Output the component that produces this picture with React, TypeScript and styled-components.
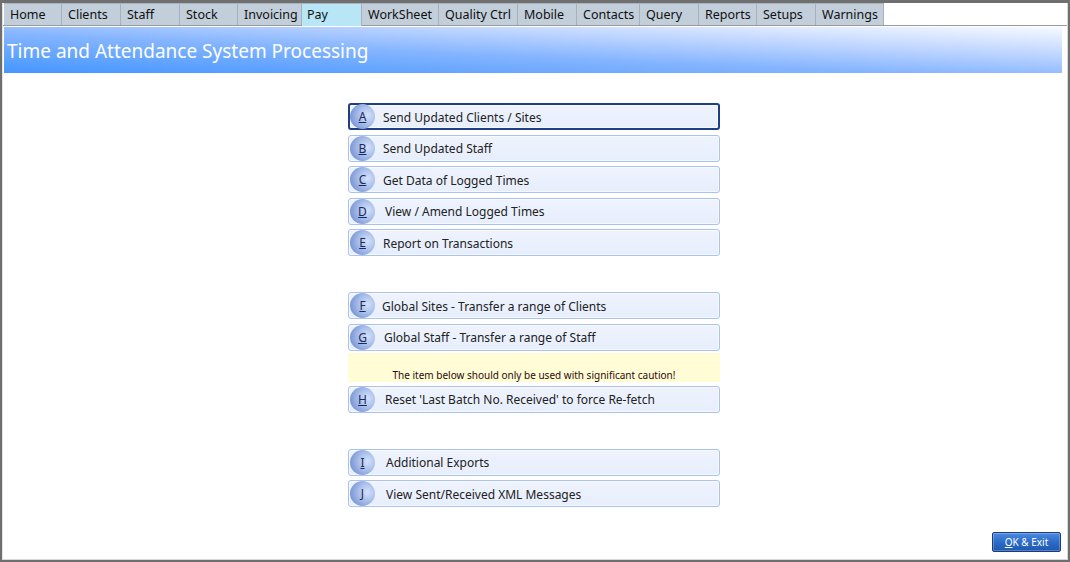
import React from "react";
import styled, { createGlobalStyle } from "styled-components";

const Global = createGlobalStyle`
  html, body { margin: 0; padding: 0; background: #ffffff; }
  body { font-family: "Noto Sans", "Open Sans", "DejaVu Sans", sans-serif; }
  * { box-sizing: border-box; }
`;

const Frame = styled.div`
  width: 1070px;
  height: 562px;
  border: 2px solid #6f6f6f;
  border-top-width: 3px;
  background: #ffffff;
  display: flex;
  flex-direction: column;
  position: relative;
  overflow: hidden;
`;

const Inner = styled.div`
  flex: 1;
  display: flex;
  flex-direction: column;
  border-left: 1px solid #e4e4e4;
  border-right: 1px solid #d8d8d8;
  border-bottom: 1px solid #d8d8d8;
`;

const TabStrip = styled.div`
  display: flex;
  padding-left: 1px;
  height: 23px;
  border-bottom: 1px solid #9a9a9a;
`;

const Tab = styled.div<{ $w: number; $active?: boolean }>`
  width: ${(p) => p.$w}px;
  height: 22px;
  background: ${(p) => (p.$active ? "#b8e6f6" : "#c2ceda")};
  border-right: 1px solid #a7b1bb;
  border-top: 1px solid #aab4be;
  color: #101010;
  font-size: 12.5px;
  line-height: 22px;
  padding-left: ${(p) => (p.$active ? 5 : 6)}px;
  white-space: nowrap;
  overflow: hidden;
  ${(p) => (p.$active ? "height: 23px; margin-bottom: -1px;" : "")}
`;

const Banner = styled.div`
  margin: 1px 5px 0 1px;
  height: 46px;
  background: linear-gradient(to bottom left, #f7faff 0%, #c0d6ff 30%, #84b4ff 58%, #4496ff 100%);
  display: flex;
  align-items: center;
  padding-left: 3px;
  padding-top: 2px;
`;

const Title = styled.div`
  color: #ffffff;
  font-size: 19px;
  font-family: "Noto Sans", "Open Sans", sans-serif;
`;

const Body = styled.div`
  flex: 1;
  display: flex;
  flex-direction: column;
  align-items: flex-start;
  padding-left: 345px;
  padding-top: 30px;
  position: relative;
`;

const Group = styled.div<{ $gap: number }>`
  display: flex;
  flex-direction: column;
  gap: 4.5px;
  margin-bottom: ${(p) => p.$gap}px;
`;

const ActionButton = styled.div<{ $focused?: boolean }>`
  width: 372px;
  height: 27px;
  border-radius: 3px;
  border: ${(p) => (p.$focused ? "2px solid #1e3f86" : "1px solid #a9c2f2")};
  background: linear-gradient(180deg, #eef3fd 0%, #e7eefc 100%);
  display: flex;
  align-items: center;
  padding-left: ${(p) => (p.$focused ? 0 : 1)}px;
  padding-top: 1px;
  box-shadow: inset 0 0 0 1px rgba(255,255,255,0.6);
`;

const Badge = styled.div`
  width: 25px;
  height: 25px;
  border-radius: 50%;
  background: radial-gradient(circle at 70% 45%, #d6e1f8 0%, #a9bfeb 40%, #7895d4 80%, #6482c8 100%);
  display: flex;
  align-items: center;
  justify-content: center;
  color: #1b2a5a;
  font-size: 12px;
  text-decoration: underline;
  flex-shrink: 0;
  margin-top: -1px;
`;

const Label = styled.span<{ $pad: number }>`
  margin-left: ${(p) => p.$pad}px;
  font-size: 12px;
  color: #222222;
  white-space: nowrap;
`;

const Caution = styled.div`
  width: 372px;
  height: 29px;
  margin-top: 2px;
  margin-bottom: 4px;
  background: #fffcd6;
  display: flex;
  align-items: flex-end;
  justify-content: center;
  font-size: 10px;
  color: #2a0a0a;
`;

const OkButton = styled.div`
  position: absolute;
  right: 6px;
  bottom: 7px;
  width: 69px;
  height: 20px;
  border: 1px solid #1b3c78;
  border-radius: 2px;
  background: linear-gradient(180deg, #4d8ae0 0%, #2c6cc8 50%, #1e58b0 100%);
  color: #ffffff;
  font-size: 10px;
  display: flex;
  align-items: center;
  justify-content: center;
  box-shadow: inset 0 0 0 1px rgba(255,255,255,0.25);
`;

const U = styled.span`
  text-decoration: underline;
`;

const tabs: [string, number][] = [
  ["Home", 58],
  ["Clients", 59],
  ["Staff", 59],
  ["Stock", 58],
  ["Invoicing", 64],
  ["Pay", 60],
  ["WorkSheet", 77],
  ["Quality Ctrl", 79],
  ["Mobile", 59],
  ["Contacts", 63],
  ["Query", 59],
  ["Reports", 58],
  ["Setups", 59],
  ["Warnings", 68],
];

type Item = { k: string; t: string; pad: number };

const g1: Item[] = [
  { k: "A", t: "Send Updated Clients / Sites", pad: 8 },
  { k: "B", t: "Send Updated Staff", pad: 8 },
  { k: "C", t: "Get Data of Logged Times", pad: 8 },
  { k: "D", t: "View / Amend Logged Times", pad: 10 },
  { k: "E", t: "Report on Transactions", pad: 8 },
];
const g2: Item[] = [
  { k: "F", t: "Global Sites - Transfer a range of Clients", pad: 7 },
  { k: "G", t: "Global Staff - Transfer a range of Staff", pad: 9 },
];
const g3: Item[] = [{ k: "H", t: "Reset 'Last Batch No. Received' to force Re-fetch", pad: 10 }];
const g4: Item[] = [
  { k: "I", t: "Additional Exports", pad: 11 },
  { k: "J", t: "View Sent/Received XML Messages", pad: 11 },
];

const Btn = ({ it, focused }: { it: Item; focused?: boolean }) => (
  <ActionButton $focused={focused}>
    <Badge>{it.k}</Badge>
    <Label $pad={it.pad}>{it.t}</Label>
  </ActionButton>
);

export default function App() {
  return (
    <>
      <Global />
      <Frame>
        <Inner>
          <TabStrip>
            {tabs.map(([n, w]) => (
              <Tab key={n} $w={w} $active={n === "Pay"}>
                {n}
              </Tab>
            ))}
          </TabStrip>
          <Banner>
            <Title>Time and Attendance System Processing</Title>
          </Banner>
          <Body>
            <Group $gap={36}>
              {g1.map((it, i) => (
                <Btn key={it.k} it={it} focused={i === 0} />
              ))}
            </Group>
            <Group $gap={0}>
              {g2.map((it) => (
                <Btn key={it.k} it={it} />
              ))}
            </Group>
            <Caution>The item below should only be used with significant caution!</Caution>
            <Group $gap={36}>
              {g3.map((it) => (
                <Btn key={it.k} it={it} />
              ))}
            </Group>
            <Group $gap={0}>
              {g4.map((it) => (
                <Btn key={it.k} it={it} />
              ))}
            </Group>
            <OkButton>
              <U>O</U>K &amp; Exit
            </OkButton>
          </Body>
        </Inner>
      </Frame>
    </>
  );
}
